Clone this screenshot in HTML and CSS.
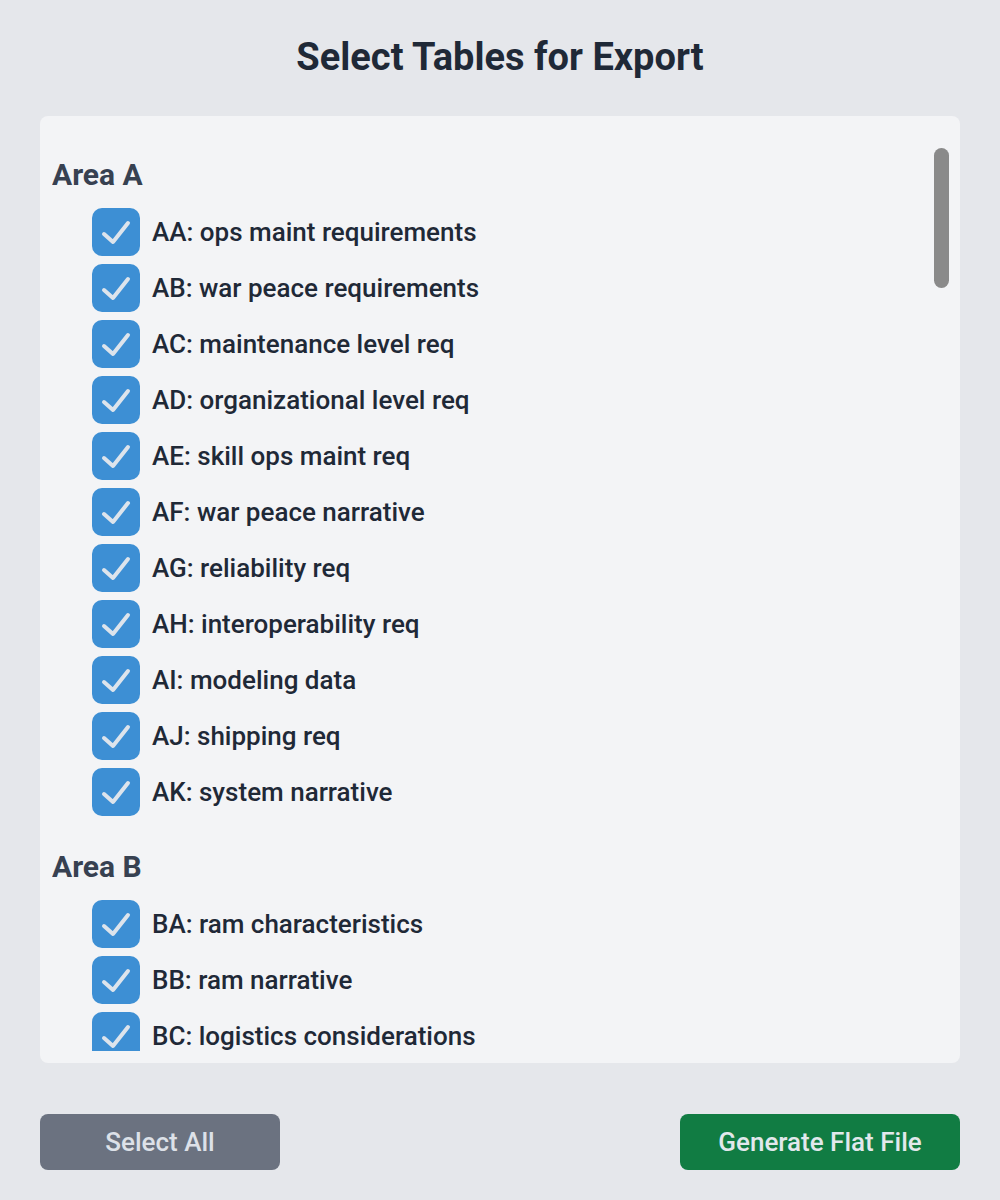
FILE: index.html
```html
<!DOCTYPE html>
<html lang="en">
<head>
    <meta charset="UTF-8">
    <meta name="viewport" content="width=device-width, initial-scale=1.0">
    <title>Select Tables for Export</title>
    <link rel="stylesheet" href="styles.css">
</head>
<body>
    <div class="app">
        <h1 class="title">Select Tables for Export</h1>

        <!-- Table list -->
        <div class="panel">
            <div class="table-list" id="tableList"></div>
            <div class="scroll-thumb" id="scrollThumb"></div>
        </div>

        <div class="actions">
            <button class="btn btn-select" id="selectAll">Select All</button>
            <button class="btn btn-generate" id="generate">Generate Flat File</button>
        </div>
    </div>

    <script>
        const areas = [
            { name: 'Area A', tables: [
                ['AA', 'ops maint requirements'],
                ['AB', 'war peace requirements'],
                ['AC', 'maintenance level req'],
                ['AD', 'organizational level req'],
                ['AE', 'skill ops maint req'],
                ['AF', 'war peace narrative'],
                ['AG', 'reliability req'],
                ['AH', 'interoperability req'],
                ['AI', 'modeling data'],
                ['AJ', 'shipping req'],
                ['AK', 'system narrative']
            ]},
            { name: 'Area B', tables: [
                ['BA', 'ram characteristics'],
                ['BB', 'ram narrative'],
                ['BC', 'logistics considerations'],
                ['BD', 'ram indicator characteristics'],
                ['BE', 'rcm analysis'],
                ['BF', 'failure modes effects'],
                ['BG', 'failure mode rcm'],
                ['BH', 'failure mode narrative'],
                ['BI', 'mission phase characteristics'],
                ['BJ', 'failure mode task'],
                ['BK', 'criticality analysis'],
                ['BL', 'mission phase narrative']
            ]},
            { name: 'Area C', tables: [
                ['CA', 'task requirement'],
                ['CB', 'subtask requirement'],
                ['CC', 'sequential subtask'],
                ['CD', 'subtask personnel'],
                ['CE', 'task narrative'],
                ['CF', 'new training requirement'],
                ['CG', 'personnel support equipment'],
                ['CH', 'task provisioned item'],
                ['CI', 'facility requirement']
            ]},
            { name: 'Area E', tables: [
                ['EA', 'support equipment'],
                ['EB', 'allocation data'],
                ['EC', 'se parameters'],
                ['ED', 'se narrative'],
                ['EE', 'se authorization'],
                ['EF', 'se calibration'],
                ['EG', 'se tmde requirement'],
                ['EH', 'se installation'],
                ['EI', 'se integrated test'],
                ['EJ', 'se operational test'],
                ['EK', 'se design data'],
                ['EL', 'se illustration']
            ]},
            { name: 'Area F', tables: [
                ['FA', 'facility'],
                ['FB', 'facility narrative'],
                ['FC', 'baseline facility']
            ]},
            { name: 'Area G', tables: [
                ['GA', 'skill specialty'],
                ['GB', 'new modified skill'],
                ['GC', 'personnel narrative'],
                ['GD', 'skill requirement'],
                ['GE', 'skill training'],
                ['GF', 'skill qualification'],
                ['GG', 'skill physical'],
                ['GH', 'skill task'],
                ['GI', 'skill duty'],
                ['GJ', 'skill mental'],
                ['GK', 'skill grade'],
                ['GL', 'skill summary']
            ]},
            { name: 'Area H', tables: [
                ['HA', 'item identification'],
                ['HB', 'additional reference'],
                ['HC', 'item packaging'],
                ['HD', 'unit of issue price'],
                ['HE', 'uoi packaging'],
                ['HF', 'packaging requirements'],
                ['HG', 'application provisioning'],
                ['HH', 'reference designation'],
                ['HI', 'serial number usable on'],
                ['HJ', 'provisioning remarks'],
                ['HK', 'system end item'],
                ['HL', 'design change'],
                ['HM', 'provisioning narrative'],
                ['HN', 'item overhaul']
            ]},
            { name: 'Area J', tables: [
                ['JA', 'transportability'],
                ['JB', 'transport narrative']
            ]},
            { name: 'Area U', tables: [
                ['UA', 'lcn indentured'],
                ['UB', 'lcn narrative'],
                ['UC', 'functional lcn'],
                ['UD', 'physical lcn'],
                ['UE', 'lcn alternate'],
                ['UF', 'lcn usable on']
            ]},
            { name: 'Area X', tables: [
                ['XA', 'end item acronym'],
                ['XB', 'lsa control number'],
                ['XC', 'system configuration'],
                ['XD', 'serial number'],
                ['XE', 'cage code'],
                ['XF', 'reference number'],
                ['XG', 'functional item'],
                ['XH', 'commercial entity'],
                ['XI', 'technical manual']
            ]}
        ];

        const checkIcon = '<svg viewBox="0 0 48 48" width="48" height="48"><path d="M12 26 L21 34 L36 15" fill="none" stroke="#dde4ec" stroke-width="4" stroke-linecap="round" stroke-linejoin="round"/></svg>';

        const list = document.getElementById('tableList');
        areas.forEach(area => {
            const section = document.createElement('section');
            section.className = 'area';
            let html = '<h2 class="area-title">' + area.name + '</h2><ul class="tables">';
            area.tables.forEach(([code, label]) => {
                html += '<li><label class="table-item">' +
                    '<input type="checkbox" class="table-check" value="' + code + '" checked>' +
                    '<span class="box">' + checkIcon + '</span>' +
                    '<span class="table-name">' + code + ': ' + label + '</span>' +
                    '</label></li>';
            });
            html += '</ul>';
            section.innerHTML = html;
            list.appendChild(section);
        });

        // Custom scrollbar thumb (track has 32px inset top and bottom)
        const thumb = document.getElementById('scrollThumb');
        function updateThumb() {
            const track = list.parentElement.clientHeight - 64;
            const size = Math.max(40, track * list.clientHeight / list.scrollHeight);
            const maxScroll = list.scrollHeight - list.clientHeight;
            const offset = maxScroll > 0 ? (track - size) * list.scrollTop / maxScroll : 0;
            thumb.style.height = size + 'px';
            thumb.style.transform = 'translateY(' + offset + 'px)';
        }
        list.addEventListener('scroll', updateThumb);
        window.addEventListener('resize', updateThumb);
        updateThumb();

        document.getElementById('selectAll').addEventListener('click', () => {
            document.querySelectorAll('.table-check').forEach(cb => cb.checked = true);
        });
    </script>
</body>
</html>
```

FILE: styles.css
```css
* {
    margin: 0;
    padding: 0;
    box-sizing: border-box;
}
body, html {
    width: 100%;
    height: 100%;
}
body {
    background-color: #e5e7eb;
    font-family: Roboto, "Liberation Sans", sans-serif;
    color: #1f2937;
}
.app {
    padding: 35px 40px 30px;
}
.title {
    font-size: 38px;
    line-height: 44px;
    font-weight: 700;
    text-align: center;
    color: #1f2937;
    margin-bottom: 37px;
}
/* Table list */
.panel {
    position: relative;
    height: 947px;
    background-color: #f3f4f6;
    border-radius: 8px;
    padding: 12px 12px 12px 12px;
}
.table-list {
    height: 100%;
    overflow-y: auto;
    padding-top: 31px;
    scrollbar-width: none;
}
.table-list::-webkit-scrollbar {
    display: none;
}
.scroll-thumb {
    position: absolute;
    top: 32px;
    right: 11px;
    width: 15px;
    height: 139px;
    background-color: #8a8a8a;
    border-radius: 8px;
}
.area {
    margin-bottom: 35px;
}
.area-title {
    font-size: 30px;
    line-height: 32px;
    font-weight: 700;
    color: #374151;
    margin-bottom: 17px;
}
.tables {
    list-style: none;
    padding-left: 40px;
    display: flex;
    flex-direction: column;
    gap: 8px;
}
.table-item {
    display: flex;
    align-items: center;
    gap: 12px;
    cursor: pointer;
}
.table-check {
    display: none;
}
.box {
    width: 48px;
    height: 48px;
    flex-shrink: 0;
    border-radius: 10px;
    background-color: #3d8fd4;
    display: flex;
}
.box svg {
    display: block;
}
.table-check:not(:checked) + .box {
    background-color: #ffffff;
    border: 2px solid #9ca3af;
}
.table-check:not(:checked) + .box svg {
    display: none;
}
.table-name {
    font-size: 26px;
    font-weight: 500;
    color: #1f2937;
}
/* Buttons */
.actions {
    display: flex;
    justify-content: space-between;
    margin-top: 51px;
}
.btn {
    height: 56px;
    border: none;
    border-radius: 8px;
    font-family: Roboto, "Liberation Sans", sans-serif;
    font-size: 26px;
    font-weight: 500;
    cursor: pointer;
}
.btn-select {
    width: 240px;
    background-color: #6b7280;
    color: #dde1e8;
}
.btn-generate {
    width: 280px;
    background-color: #117c43;
    color: #e2e8ec;
}
```
